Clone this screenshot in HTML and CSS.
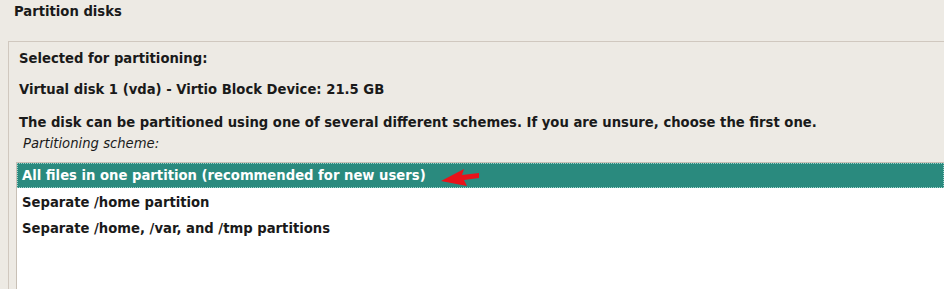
FILE: index.html
```html
<!DOCTYPE html>
<html lang="en">
<head>
    <meta charset="UTF-8">
    <title>Partition disks</title>
    <link rel="stylesheet" href="styles.css">
</head>
<body>
    <div class="title-bar">Partition disks</div>
    <div class="panel">
        <div class="label">Selected for partitioning:</div>
        <div class="label">Virtual disk 1 (vda) - Virtio Block Device: 21.5 GB</div>
        <div class="label">The disk can be partitioned using one of several different schemes. If you are unsure, choose the first one.</div>
        <div class="scheme-label">Partitioning scheme:</div>
        <div class="list-box">
            <div class="list-row selected">
                <span>All files in one partition (recommended for new users)</span>
                <svg class="arrow" width="40" height="20" viewBox="0 0 40 20">
                    <polygon points="1,14 24,2 22,8 39,6 39,11 24,13 27,19" fill="#e8131a"/>
                </svg>
            </div>
            <div class="list-row">Separate /home partition</div>
            <div class="list-row">Separate /home, /var, and /tmp partitions</div>
        </div>
    </div>
</body>
</html>
```

FILE: styles.css
```css
html, body {
    height: 100%;
}
body {
    margin: 0;
    padding: 0;
    background: #edeae4;
    font-family: "DejaVu Sans", Verdana, sans-serif;
    font-size: 13.2px;
    color: #1a1a1a;
    overflow: hidden;
}
.title-bar {
    font-weight: bold;
    line-height: 18px;
    padding: 3px 0 0 14px;
    height: 41px;
    box-sizing: border-box;
}
.panel {
    margin-left: 8px;
    border-top: 1px solid #d0c8bf;
    border-left: 1px solid #d0c8bf;
    padding: 8px 0 0 10px;
    height: 260px;
}
.label {
    font-weight: bold;
    line-height: 18px;
    margin-bottom: 13px;
}
.label:nth-child(2) {
    margin-bottom: 15px;
}
.label:nth-child(3) {
    margin-bottom: 3px;
}
.scheme-label {
    font-style: italic;
    line-height: 18px;
    padding-left: 4px;
    margin-bottom: 9px;
}
.list-box {
    background: #fff;
    border-top: 1px solid #c8c0b6;
    border-left: 1px solid #c8c0b6;
    margin-left: -3px;
    height: 200px;
}
.list-row {
    font-weight: bold;
    height: 26px;
    padding-left: 5px;
    display: flex;
    align-items: center;
}
.list-row.selected {
    height: 25px;
    margin-bottom: 1px;
    background: #2a8a7e;
    color: #fff;
    outline: 1px dotted #9fd2cb;
    outline-offset: -1px;
}
.arrow {
    margin-left: 14px;
    margin-top: 2px;
}
```
